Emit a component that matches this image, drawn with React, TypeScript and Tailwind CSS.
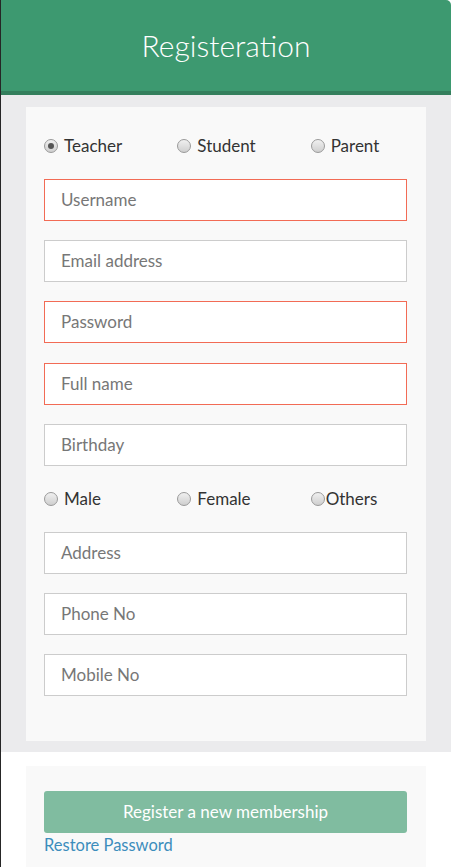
import React from "react";

const font = { fontFamily: "Lato, 'Open Sans', 'Liberation Sans', sans-serif" };

function Radio({ label, checked }: { label: string; checked?: boolean }) {
  return (
    <label className="flex items-center h-5 text-[17px] text-[#333]">
      <span className="relative w-[14px] h-[14px] rounded-full border border-[#9a9a9a] bg-gradient-to-b from-[#f0f0f0] to-[#cfcfcf] flex items-center justify-center shrink-0">
        {checked && <span className="w-[6px] h-[6px] rounded-full bg-[#555]" />}
      </span>
      <span className="ml-[6px]">{label}</span>
    </label>
  );
}

function Field({ placeholder, error, mb = "mb-[19px]" }: { placeholder: string; error?: boolean; mb?: string }) {
  return (
    <div
      className={`h-[42px] bg-white border ${error ? "border-[#f26b55]" : "border-[#cccccc]"} flex items-center pl-[16px] text-[17px] text-[#777] ${mb}`}
    >
      {placeholder}
    </div>
  );
}

export default function App() {
  return (
    <div className="w-[451px] h-[867px] bg-[#262626] pl-[1px] overflow-hidden" style={font}>
      <div className="bg-white h-full">
        <div className="h-[95px] bg-[#3d9970] border-b-[4px] border-[#347f5d] rounded-tr-[5px] flex items-center justify-center">
          <h1 className="text-white text-[30px] font-light -mt-[1px]">Registeration</h1>
        </div>
        <div className="bg-[#ebebed] pt-[12px] pb-[11px] pl-[25px] pr-[25px]">
          <div className="bg-[#f9f9f9] pt-[29px] pb-[45px]">
            <div className="grid grid-cols-3 mb-[23px]">
              <div className="pl-[18px]"><Radio label="Teacher" checked /></div>
              <div className="pl-[18px]"><Radio label="Student" /></div>
              <div className="pl-[18px]"><Radio label="Parent" /></div>
            </div>
            <div className="pl-[18px] pr-[19px]">
              <Field placeholder="Username" error />
              <Field placeholder="Email address" />
              <Field placeholder="Password" error mb="mb-[20px]" />
              <Field placeholder="Full name" error />
              <Field placeholder="Birthday" mb="mb-0" />
            </div>
            <div className="grid grid-cols-3 mt-[23px] mb-[23px]">
              <div className="pl-[18px]"><Radio label="Male" /></div>
              <div className="pl-[18px]"><Radio label="Female" /></div>
              <div className="pl-[18px]">
                <label className="flex items-center h-5 text-[17px] text-[#333]">
                  <span className="w-[14px] h-[14px] rounded-full border border-[#9a9a9a] bg-gradient-to-b from-[#f0f0f0] to-[#cfcfcf] shrink-0" />
                  <span className="ml-[1px]">Others</span>
                </label>
              </div>
            </div>
            <div className="pl-[18px] pr-[19px]">
              <Field placeholder="Address" />
              <Field placeholder="Phone No" />
              <Field placeholder="Mobile No" mb="mb-0" />
            </div>
          </div>
        </div>
        <div className="pt-[14px] pl-[25px] pr-[25px]">
          <div className="bg-[#f9f9f9] pt-[25px] pl-[18px] pr-[19px] h-[120px]">
            <button className="w-full h-[42px] rounded-[3px] bg-[#80bca0] text-white text-[17px] flex items-center justify-center">
              Register a new membership
            </button>
            <a className="block mt-[2px] text-[16.5px] text-[#3c8dbc] leading-5">Restore Password</a>
          </div>
        </div>
      </div>
    </div>
  );
}
